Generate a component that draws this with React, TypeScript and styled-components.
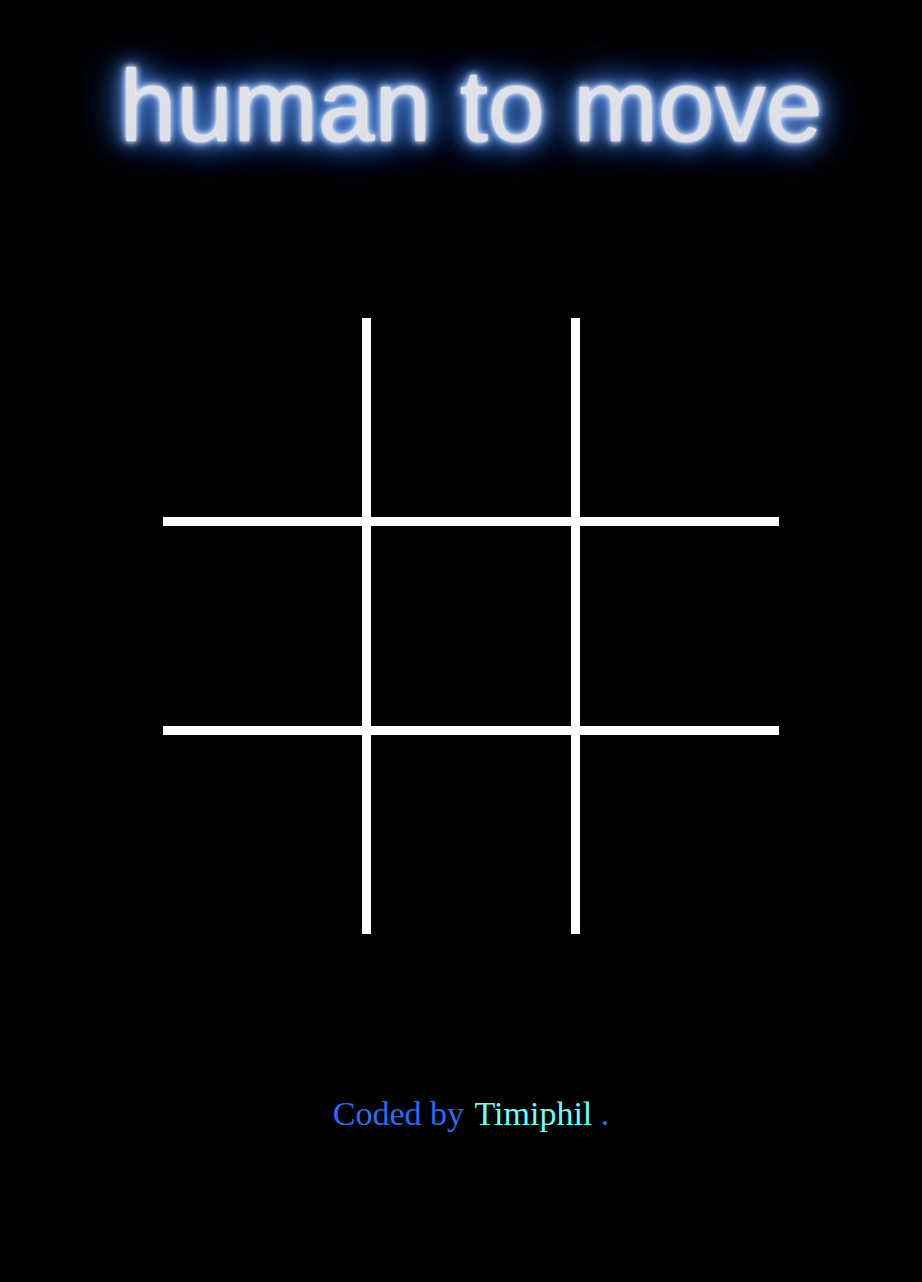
import React from "react";
import styled, { createGlobalStyle } from "styled-components";

const GlobalStyle = createGlobalStyle`
  html, body {
    margin: 0;
    padding: 0;
    background: #000;
  }
  body {
    font-family: "Liberation Serif", "Times New Roman", serif;
  }
`;

const Page = styled.main`
  min-height: 1282px;
  box-sizing: border-box;
  padding: 48px 0 0 20px;
  display: flex;
  flex-direction: column;
  align-items: center;
  background: #000;
`;

const Title = styled.h1`
  margin: 0;
  font-family: "Liberation Sans", Arial, Helvetica, sans-serif;
  font-weight: 400;
  font-size: 102px;
  line-height: 116px;
  color: #dfe1e7;
  white-space: nowrap;
  text-shadow:
    0 0 2px #ffffff,
    0 0 6px #ffffff,
    0 0 10px #8db4f0,
    0 0 16px #5b8fe2,
    0 0 22px #4a7fd6,
    0 0 30px #3b6ec4,
    0 0 40px #2f5faf,
    0 0 55px #22498c,
    0 0 70px #163465;
`;

const Board = styled.div`
  margin-top: 154px;
  display: grid;
  grid-template-columns: 199px 200px 199px;
  grid-template-rows: 199px 200px 199px;
  gap: 9px;
  background: #ffffff;
`;

const Cell = styled.div`
  background: #000;
`;

const Footer = styled.p`
  margin: 160px 0 0;
  font-family: "Liberation Serif", "Times New Roman", serif;
  font-size: 34px;
  line-height: 40px;
  color: #2a6cf6;
`;

const Name = styled.span`
  margin-left: 2px;
  color: #6ffcfa;
`;

export default function App() {
  const cells = Array.from({ length: 9 }, (_, i) => i);
  return (
    <>
      <GlobalStyle />
      <Page>
        <Title>human to move</Title>
        <Board>
          {cells.map((i) => (
            <Cell key={i} />
          ))}
        </Board>
        <Footer>
          Coded by <Name>Timiphil</Name> .
        </Footer>
      </Page>
    </>
  );
}
